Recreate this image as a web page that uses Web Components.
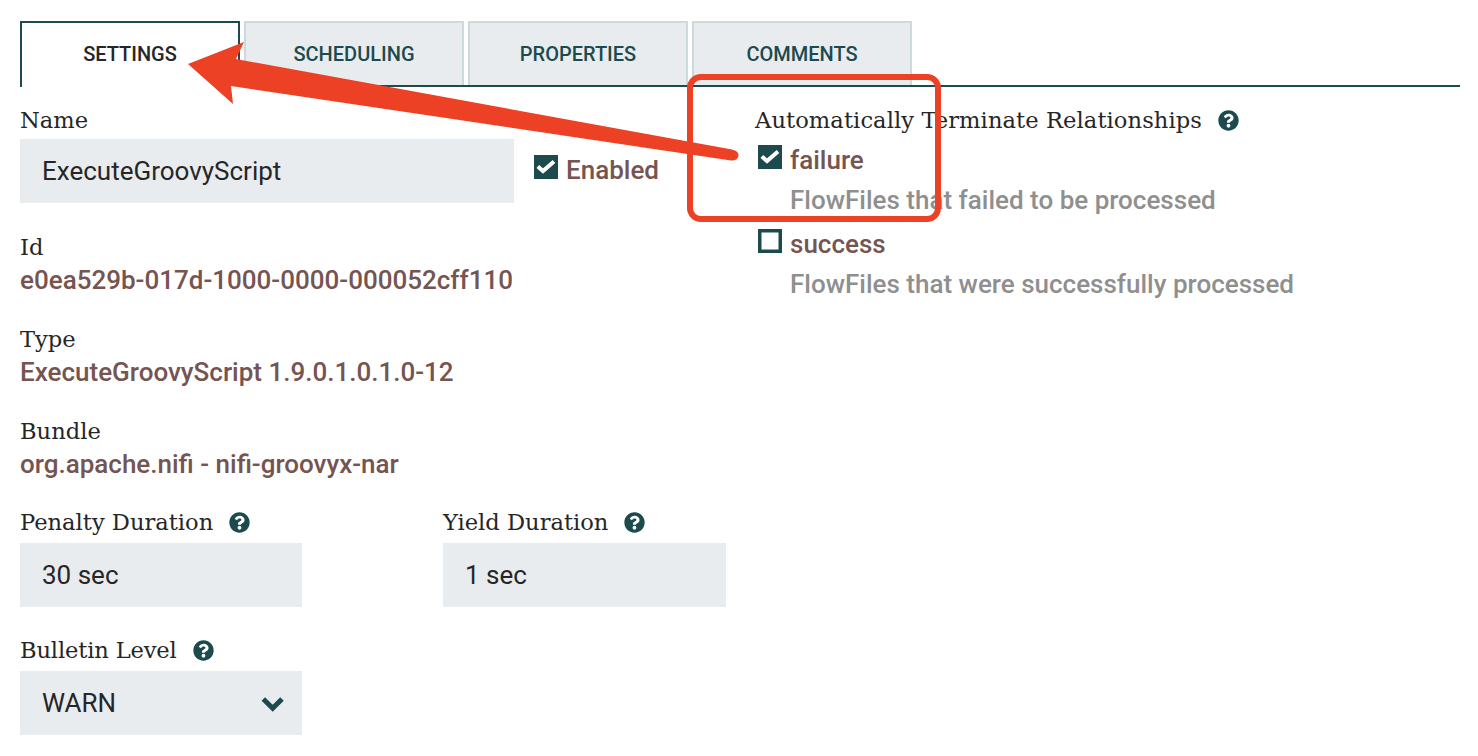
<!DOCTYPE html>
<html>
<head>
<meta charset="utf-8">
<title>Processor settings</title>
<style>
  html, body { margin: 0; padding: 0; background: #fff; }
  body { font-family: "Roboto", "Liberation Sans", sans-serif; overflow: hidden; }
</style>
</head>
<body>
<settings-page></settings-page>

<script>
const HELP_PATH = "M504 256c0 136.997-111.043 248-248 248S8 392.997 8 256C8 119.083 119.043 8 256 8s248 111.083 248 248zM262.655 90c-54.497 0-89.255 22.957-116.549 63.758-3.536 5.286-2.353 12.415 2.715 16.258l34.699 26.31c5.205 3.947 12.621 3.008 16.665-2.122 17.864-22.658 30.113-35.797 57.303-35.797 20.429 0 45.698 13.148 45.698 32.958 0 14.976-12.363 22.667-32.534 33.976C247.128 238.528 216 254.941 216 296v4c0 6.627 5.373 12 12 12h56c6.627 0 12-5.373 12-12v-1.333c0-28.462 83.186-29.647 83.186-106.667 0-58.002-60.165-102-116.531-102zM256 338c-25.365 0-46 20.635-46 46 0 25.364 20.635 46 46 46s46-20.636 46-46c0-25.365-20.635-46-46-46z";

class TabBar extends HTMLElement {
  constructor() {
    super();
    this.attachShadow({ mode: "open" });
    this.shadowRoot.innerHTML = `
      <style>
        :host { display: flex; gap: 4px; margin: 0 18px 0 20px; padding-top: 21px; height: 64px; border-bottom: 2px solid #1c4a4d; box-sizing: content-box; }
      </style>
      <slot></slot>
    `;
  }
}

class TabItem extends HTMLElement {
  constructor() {
    super();
    this.attachShadow({ mode: "open" });
    this.shadowRoot.innerHTML = `
      <style>
        :host {
          display: flex; align-items: center; justify-content: center;
          box-sizing: border-box; width: 220px; height: 64px;
          background: #e9ecef; border: 2px solid #ccdadb; border-bottom: none;
          color: #1c4a4d; font: 500 20px "Roboto", sans-serif;
          text-transform: uppercase;
        }
        :host([active]) {
          background: #fff; border-color: #1c4a4d; color: #262626; height: 66px;
          margin-bottom: -2px; padding-bottom: 2px; position: relative;
        }
      </style>
      <slot></slot>
    `;
  }
}

class HelpIcon extends HTMLElement {
  constructor() {
    super();
    this.attachShadow({ mode: "open" });
    this.shadowRoot.innerHTML = `
      <style>
        :host { display: inline-flex; width: 21px; height: 21px; }
        svg { width: 100%; height: 100%; fill: #1c4a4d; }
      </style>
      <svg viewBox="0 0 512 512"><path d="${HELP_PATH}"/></svg>
    `;
  }
}

class FieldLabel extends HTMLElement {
  constructor() {
    super();
    this.attachShadow({ mode: "open" });
    this.shadowRoot.innerHTML = `
      <style>
        :host {
          display: flex; align-items: center; height: 32px;
          font: 400 22.6px "DejaVu Serif", serif; color: #262626; white-space: nowrap;
        }
        ::slotted(help-icon) { margin-left: 16px; }
      </style>
      <slot></slot>
    `;
  }
}

class ValueBox extends HTMLElement {
  constructor() {
    super();
    this.attachShadow({ mode: "open" });
    this.shadowRoot.innerHTML = `
      <style>
        :host {
          display: flex; align-items: center; justify-content: space-between;
          box-sizing: border-box; height: 64px; padding: 0 16px 0 22px; background: #e9ecef;
          font: 400 26px "Roboto", sans-serif; color: #262626;
        }
        svg { width: 26px; height: 18px; fill: none; stroke: #1c4a4d; stroke-width: 5; }
      </style>
      <slot></slot>
      <svg viewBox="0 0 26 18" style="display:none"><path d="M3.300 5l9.400 9.300L22 5"/></svg>
    `;
  }
  connectedCallback() {
    if (this.hasAttribute("select")) {
      this.shadowRoot.querySelector("svg").style.display = "block";
    }
  }
}

class DetailField extends HTMLElement {
  constructor() {
    super();
    this.attachShadow({ mode: "open" });
    this.shadowRoot.innerHTML = `
      <style>
        :host { display: block; margin-top: 27px; }
        .value { margin-top: 1px; font: 500 26px/32px "Roboto", sans-serif; color: #755451; white-space: nowrap; }
      </style>
      <field-label>${this.getAttribute("label")}</field-label>
      <div class="value"><slot></slot></div>
    `;
  }
}

class CheckMark extends HTMLElement {
  constructor() {
    super();
    this.attachShadow({ mode: "open" });
    this.shadowRoot.innerHTML = `
      <style>
        :host { display: block; width: 24px; height: 24px; flex: none; }
        svg { display: block; width: 24px; height: 24px; }
        .soft { filter: blur(0.5px); }
      </style>
      <svg viewBox="0 0 24 24">
        <rect width="24" height="24" fill="#1c4a4d"/>
        <rect class="hole soft" x="3.500" y="3.500" width="17" height="17" fill="#fff"/>
        <path class="tick soft" d="M3.800 11.500l5.200 4.500L20 6.500" fill="none" stroke="#fff" stroke-width="4"/>
      </svg>
    `;
  }
  connectedCallback() {
    const on = this.hasAttribute("checked");
    this.shadowRoot.querySelector(".hole").style.display = on ? "none" : "";
    this.shadowRoot.querySelector(".tick").style.display = on ? "" : "none";
  }
}

class RelationshipItem extends HTMLElement {
  constructor() {
    super();
    this.attachShadow({ mode: "open" });
    this.shadowRoot.innerHTML = `
      <style>
        :host { display: block; padding-left: 3px; height: 84px; }
        .top { display: flex; gap: 8px; height: 28px; }
        .name { margin-top: 1px; font: 500 26px/28px "Roboto", sans-serif; color: #755451; }
        .desc { margin: 13px 0 0 32px; font: 500 26px/28px "Roboto", sans-serif; color: #8f8f8f; white-space: nowrap; }
      </style>
      <div class="top">
        <check-mark ${this.hasAttribute("checked") ? "checked" : ""}></check-mark>
        <span class="name">${this.getAttribute("name")}</span>
      </div>
      <div class="desc"><slot></slot></div>
    `;
  }
}

class NoteOverlay extends HTMLElement {
  constructor() {
    super();
    this.attachShadow({ mode: "open" });
    this.shadowRoot.innerHTML = `
      <style>
        :host { position: absolute; left: 0; top: 0; width: 1478px; height: 756px; pointer-events: none; }
        svg { display: block; }
      </style>
      <svg width="1478" height="756" viewBox="0 0 1478 756">
        <rect x="690" y="77" width="248" height="142" rx="11" fill="none" stroke="#ec4125" stroke-width="6"/>
        <path d="M188 64L244 42L236 59L732 149.500Q739 151 738.500 156Q737 161 731 160.500L231 86L233 104Z" fill="#ec4125"/>
      </svg>
    `;
  }
}

class SettingsPage extends HTMLElement {
  constructor() {
    super();
    this.attachShadow({ mode: "open" });
    this.shadowRoot.innerHTML = `
      <style>
        :host { display: block; position: relative; width: 1478px; height: 756px; overflow: hidden; }
        .body { display: grid; grid-template-columns: 735px 1fr; padding: 17px 0 0 20px; }
        .name-row { display: flex; gap: 20px; margin: 3px 0 28px; }
        .name-row value-box { width: 494px; }
        .enabled { display: flex; align-items: flex-start; gap: 8px; padding-top: 16px; font: 500 26px/30px "Roboto", sans-serif; color: #755451; }
        .durations { display: flex; gap: 141px; margin-top: 26px; }
        .duration { width: 282px; }
        .duration:last-child { width: 283px; }
        .duration value-box { margin-top: 5px; }
        .level value-box { margin-top: 5px; }
        .level { width: 282px; margin-top: 27px; }
        .level field-label { letter-spacing: -0.15px; }
        .right field-label { margin-bottom: 9px; letter-spacing: 0.08px; }
        .left detail-field:first-of-type { margin-top: 0; }
      </style>
      <tab-bar>
        <tab-item active>Settings</tab-item>
        <tab-item>Scheduling</tab-item>
        <tab-item>Properties</tab-item>
        <tab-item>Comments</tab-item>
      </tab-bar>
      <div class="body">
        <div class="left">
          <field-label>Name</field-label>
          <div class="name-row">
            <value-box>ExecuteGroovyScript</value-box>
            <div class="enabled"><check-mark checked></check-mark><span>Enabled</span></div>
          </div>
          <detail-field label="Id">e0ea529b-017d-1000-0000-000052cff110</detail-field>
          <detail-field label="Type">ExecuteGroovyScript 1.9.0.1.0.1.0-12</detail-field>
          <detail-field label="Bundle">org.apache.nifi - nifi-groovyx-nar</detail-field>
          <div class="durations">
            <div class="duration">
              <field-label>Penalty Duration<help-icon></help-icon></field-label>
              <value-box>30 sec</value-box>
            </div>
            <div class="duration">
              <field-label>Yield Duration<help-icon></help-icon></field-label>
              <value-box>1 sec</value-box>
            </div>
          </div>
          <div class="level">
            <field-label>Bulletin Level<help-icon></help-icon></field-label>
            <value-box select>WARN</value-box>
          </div>
        </div>
        <div class="right">
          <field-label>Automatically Terminate Relationships<help-icon></help-icon></field-label>
          <relationship-item checked name="failure">FlowFiles that failed to be processed</relationship-item>
          <relationship-item name="success">FlowFiles that were successfully processed</relationship-item>
        </div>
      </div>
      <note-overlay></note-overlay>
    `;
  }
}

// children before parents, so nested elements upgrade with their attributes in place
customElements.define("tab-bar", TabBar);
customElements.define("tab-item", TabItem);
customElements.define("help-icon", HelpIcon);
customElements.define("field-label", FieldLabel);
customElements.define("value-box", ValueBox);
customElements.define("detail-field", DetailField);
customElements.define("check-mark", CheckMark);
customElements.define("relationship-item", RelationshipItem);
customElements.define("note-overlay", NoteOverlay);
customElements.define("settings-page", SettingsPage);
</script>
</body>
</html>
